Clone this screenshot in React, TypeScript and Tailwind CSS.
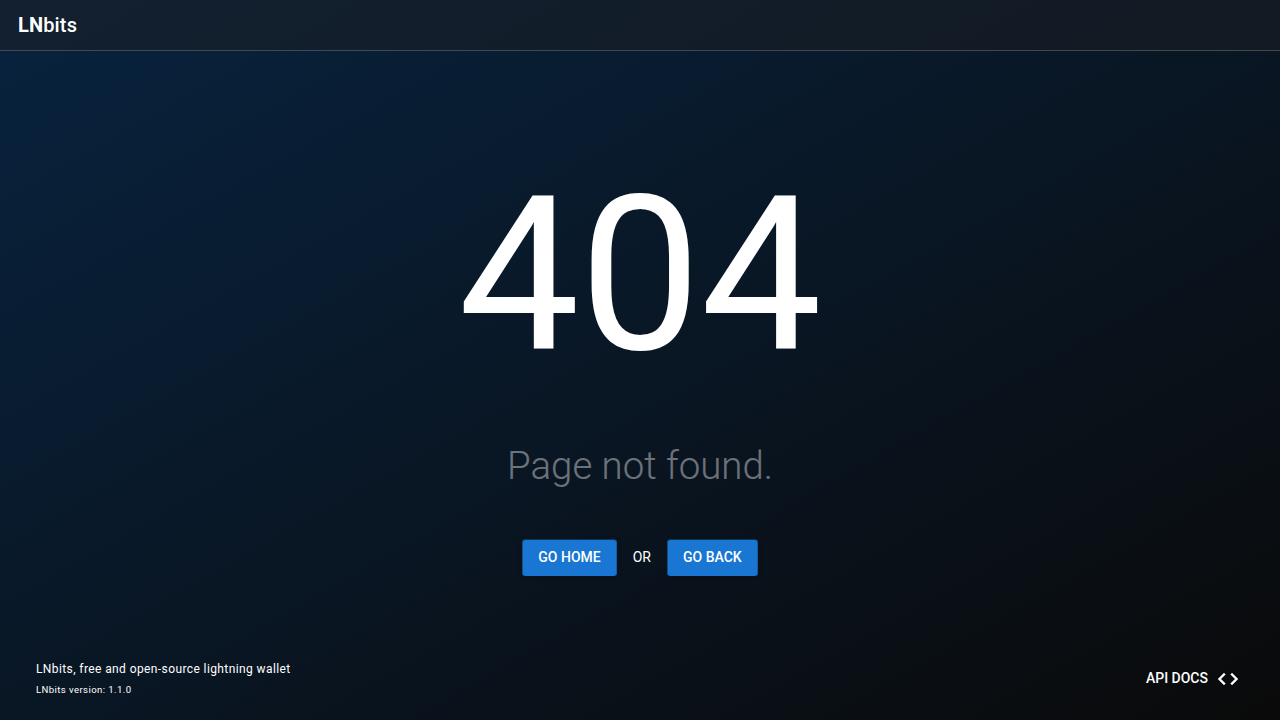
import React from "react";

function ActionButton({ label }: { label: string }) {
  return (
    <button className="h-9 rounded-[3px] bg-[#1976d2] px-4 pb-0.5 font-medium shadow-[0_-1px_0_rgba(25,118,210,0.35),inset_1px_0_0_rgba(10,20,32,0.4),inset_-1px_0_0_rgba(10,20,32,0.25),0_1px_5px_rgba(0,0,0,0.2)]">
      {label}
    </button>
  );
}

function CodeIcon() {
  return (
    <svg viewBox="0 0 24 24" className="mt-0.5 size-6 fill-current stroke-current stroke-[0.4]" aria-hidden="true">
      <path d="M9.4 16.6 4.8 12l4.6-4.6L8 6l-6 6 6 6 1.4-1.4zm5.2 0 4.6-4.6-4.6-4.6L16 6l6 6-6 6-1.4-1.4z" />
    </svg>
  );
}

export default function App() {
  return (
    <div className="flex h-screen flex-col bg-[#0a0a0a] bg-[linear-gradient(to_bottom_right,#08233f,#0a0a0a)] font-[Roboto,sans-serif] text-sm leading-[21px] text-white">
      <header className="flex h-[51px] shrink-0 items-center border-b border-white/20 bg-[#1c1d21]/50 px-[18px]">
        <span className="text-[20px] leading-5 font-medium tracking-[0.14px]">
          <strong className="font-bold">LN</strong>bits
        </span>
      </header>
      <main className="flex flex-1 flex-col items-center">
        <div className="mt-[97px] text-[216px] leading-[256px] tracking-[-0.3px]">404</div>
        <div className="mt-[38px] text-[38.4px] leading-[48px] font-light opacity-40">Page not found.</div>
        <div className="mt-[50px] flex items-center gap-4">
          <ActionButton label="GO HOME" />
          <span className="pb-0.5">OR</span>
          <ActionButton label="GO BACK" />
        </div>
      </main>
      <footer className="flex h-[84px] shrink-0 items-center justify-between pr-10 pl-9">
        <div className="pt-[3px]">
          <div className="text-xs leading-5 tracking-[0.4px]">LNbits, free and open-source lightning wallet</div>
          <div className="pt-px text-[9.6px] leading-5 tracking-[0.4px]">LNbits version: 1.1.0</div>
        </div>
        <button className="flex items-center gap-2 font-medium">
          API DOCS
          <CodeIcon />
        </button>
      </footer>
    </div>
  );
}
